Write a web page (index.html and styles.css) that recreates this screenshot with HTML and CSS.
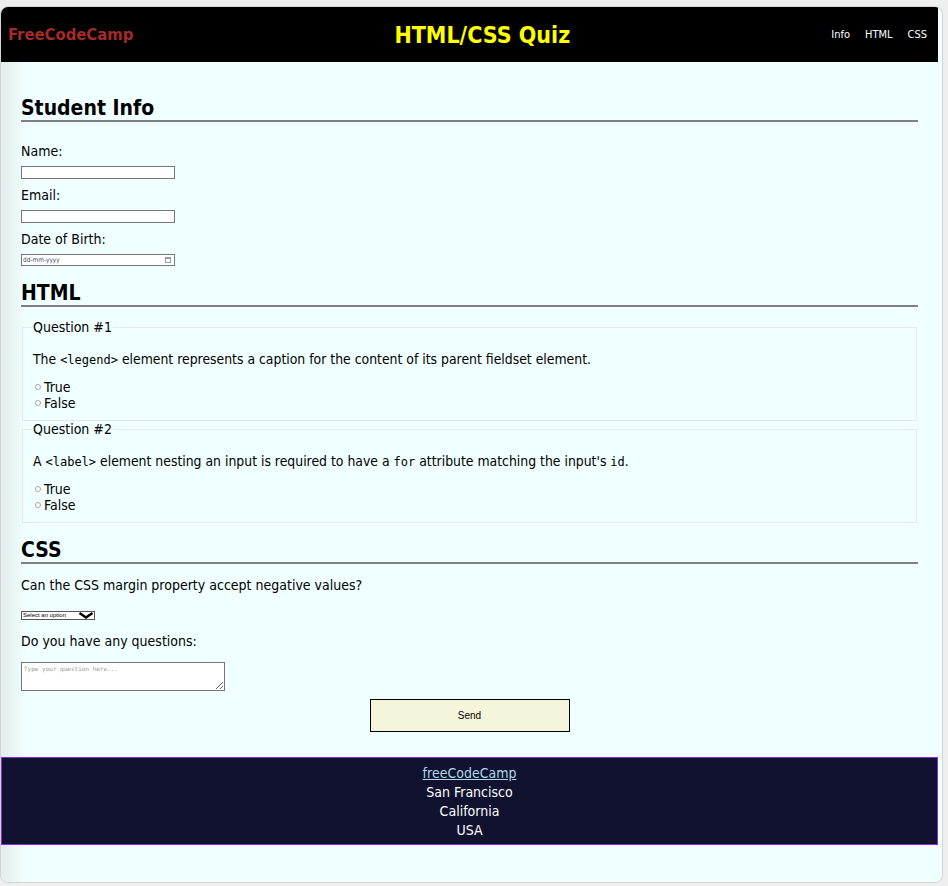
FILE: index.html
```html
<!DOCTYPE html>
<html lang="en">
<head>
<meta charset="utf-8">
<title>HTML/CSS Quiz</title>
<link rel="stylesheet" href="styles.css">
</head>
<body>
<div class="window">
  <div class="page">
    <header class="topbar">
      <div class="logo">FreeCodeCamp</div>
      <h1 class="title">HTML/CSS Quiz</h1>
      <nav class="nav">
        <a href="#student-info">Info</a>
        <a href="#html-questions">HTML</a>
        <a href="#css-questions">CSS</a>
      </nav>
    </header>
    <main class="main">
      <form class="quiz">
        <section class="section" id="student-info">
          <h2 class="section-title section-title--first">Student Info</h2>
          <div class="fields">
            <div class="field">
              <label class="field-label" for="name">Name:</label>
              <input class="text-input" id="name" type="text">
            </div>
            <div class="field">
              <label class="field-label" for="email">Email:</label>
              <input class="text-input" id="email" type="email">
            </div>
            <div class="field">
              <label class="field-label" for="birth-date">Date of Birth:</label>
              <div class="date-box">
                <input class="date-input" id="birth-date" type="text" placeholder="dd-mm-yyyy">
                <svg class="cal-icon" width="6" height="6" viewBox="0 0 6 6"><rect x="0.5" y="0.5" width="5" height="5" fill="none" stroke="#9a9a9a" stroke-width="1"/><rect x="0.5" y="0.5" width="5" height="1.5" fill="#9a9a9a"/></svg>
              </div>
            </div>
          </div>
        </section>

        <section class="section" id="html-questions">
          <h2 class="section-title">HTML</h2>
          <fieldset class="question">
            <legend>Question #1</legend>
            <p class="question-text">The <code>&lt;legend&gt;</code> element represents a caption for the content of its parent fieldset element.</p>
            <label class="option"><input class="radio" type="radio" name="q1" value="true">True</label>
            <label class="option"><input class="radio" type="radio" name="q1" value="false">False</label>
          </fieldset>
          <fieldset class="question">
            <legend>Question #2</legend>
            <p class="question-text">A <code>&lt;label&gt;</code> element nesting an input is required to have a <code>for</code> attribute matching the input's <code>id</code>.</p>
            <label class="option"><input class="radio" type="radio" name="q2" value="true">True</label>
            <label class="option"><input class="radio" type="radio" name="q2" value="false">False</label>
          </fieldset>
        </section>

        <section class="section" id="css-questions">
          <h2 class="section-title">CSS</h2>
          <label class="css-question" for="margin-select">Can the CSS margin property accept negative values?</label>
          <div class="select-wrap">
            <select class="select" id="margin-select">
              <option>Select an option</option>
              <option>Yes</option>
              <option>No</option>
            </select>
            <svg class="chevron" width="16" height="7" viewBox="0 0 16 7"><polyline points="1.5,1 8,5.5 14.5,1" fill="none" stroke="#000" stroke-width="2.4" stroke-linejoin="miter"/></svg>
          </div>
          <label class="css-question css-question--gap" for="questions">Do you have any questions:</label>
          <textarea class="textarea" id="questions" placeholder="Type your question here..."></textarea>
        </section>

        <div class="submit-row">
          <button class="send" type="submit">Send</button>
        </div>
      </form>
    </main>
    <footer class="footer">
      <p><a href="#">freeCodeCamp</a></p>
      <p>San Francisco</p>
      <p>California</p>
      <p>USA</p>
    </footer>
  </div>
</div>
</body>
</html>
```
FILE: styles.css
```css
* {
  box-sizing: border-box;
}

html,
body {
  margin: 0;
}

body {
  width: 948px;
  height: 886px;
  overflow: hidden;
  background: #efefef;
  font-family: "DejaVu Sans Condensed", "DejaVu Sans", sans-serif;
  font-stretch: semi-condensed;
  color: #000;
}

.window {
  margin-top: 6px;
  width: 943px;
  height: 877px;
  background: #f0ffff;
  border: 1px solid #d4d4d4;
  border-radius: 8px;
  overflow: hidden;
}

.page {
  width: 937px;
  height: 100%;
  background: linear-gradient(90deg, #e2eded 0, #f0ffff 26px);
  display: flex;
  flex-direction: column;
}

/* Header */
.topbar {
  flex: none;
  height: 55px;
  background: #000;
  display: flex;
  justify-content: space-between;
  align-items: center;
  padding: 0 11px 0 7px;
}

.logo {
  color: #a52a2a;
  font-weight: bold;
  font-size: 16.5px;
}

.title {
  margin: 0;
  color: #ffff00;
  font-size: 23px;
  font-weight: bold;
}

.nav {
  display: flex;
  gap: 15px;
  font-size: 11px;
}

.nav a {
  color: #fff;
  text-decoration: none;
}

/* Main */
.main {
  flex: none;
  padding: 34px 20px 25px;
}

.section-title {
  margin: 15px 0 0;
  font-size: 21px;
  line-height: 24px;
  font-weight: bold;
  border-bottom: 2px solid #808080;
}

.section-title--first {
  margin-top: 0;
}

.fields {
  margin-top: 20px;
  display: flex;
  flex-direction: column;
  gap: 7px;
}

.field {
  display: flex;
  flex-direction: column;
  align-items: flex-start;
  gap: 6px;
}

.field-label {
  font-size: 14px;
  line-height: 18px;
}

.text-input {
  width: 154px;
  height: 13px;
  margin: 0;
  padding: 0;
  border: 1px solid #767676;
  background: #fff;
}

.date-box {
  width: 154px;
  height: 12px;
  border: 1px solid #767676;
  background: #fff;
  display: flex;
  align-items: center;
  justify-content: space-between;
  padding: 0 3px 0 1px;
}

.date-input {
  width: 80px;
  height: 10px;
  border: 0;
  padding: 0;
  margin: 0;
  font-family: "DejaVu Sans Condensed", "DejaVu Sans", sans-serif;
  font-size: 6.5px;
  background: transparent;
  outline: none;
}

.date-input::placeholder {
  color: #3c4a6a;
}

.cal-icon {
  display: block;
}

/* Fieldsets */
.question {
  margin: 12px 1px 0;
  padding: 0 10px 9px;
  border: 1px solid #e8e8ea;
  min-width: 0;
}

.question + .question {
  margin-top: 0;
}

.question legend {
  padding: 0 1px;
  margin-left: -1px;
  font-size: 14px;
  line-height: 16px;
}

.question-text {
  margin: 16px 0 10px;
  font-size: 13.85px;
  line-height: 17px;
}

code {
  font-family: "DejaVu Sans Mono", monospace;
  font-size: 12px;
}

.option {
  display: flex;
  align-items: center;
  font-size: 14px;
  line-height: 16px;
}

.radio {
  appearance: none;
  width: 6px;
  height: 6px;
  margin: 0 3px 0 2px;
  border: 1px solid #a8a8a8;
  border-radius: 50%;
  background: #fff;
}

/* CSS section */
.css-question {
  display: block;
  margin-top: 12px;
  font-size: 14px;
  line-height: 18px;
}

.select-wrap {
  margin-top: 17px;
  width: 74px;
  height: 9px;
  border: 1px solid #555;
  background: #fff;
  display: flex;
  align-items: center;
}

.select {
  appearance: none;
  width: 56px;
  height: 7px;
  border: 0;
  padding: 0 0 0 1px;
  margin: 0;
  font-family: "Liberation Sans", sans-serif;
  font-size: 6px;
  line-height: 7px;
  background: transparent;
  color: #000;
}

.chevron {
  display: block;
}

.css-question--gap {
  margin-top: 12px;
}

.textarea {
  display: block;
  margin-top: 12px;
  width: 204px;
  height: 29px;
  border: 1px solid #767676;
  padding: 2px;
  font-family: "DejaVu Sans Mono", monospace;
  font-size: 6px;
  background: #fff;
  resize: both;
}

.textarea::placeholder {
  color: #9a9a9a;
}

.submit-row {
  display: flex;
  justify-content: center;
  margin-top: 8px;
}

.send {
  width: 200px;
  height: 33px;
  padding: 0;
  background: #f5f5dc;
  border: 1px solid #000;
  font-family: "Liberation Sans", sans-serif;
  font-size: 10px;
  color: #000;
}

/* Footer */
.footer {
  flex: none;
  background: #111130;
  border: 1px solid #8a2be2;
  padding: 6px 0 4px;
  text-align: center;
  color: #fff;
  font-size: 14px;
  line-height: 19px;
}

.footer p {
  margin: 0;
}

.footer a {
  color: #add8e6;
}
```
